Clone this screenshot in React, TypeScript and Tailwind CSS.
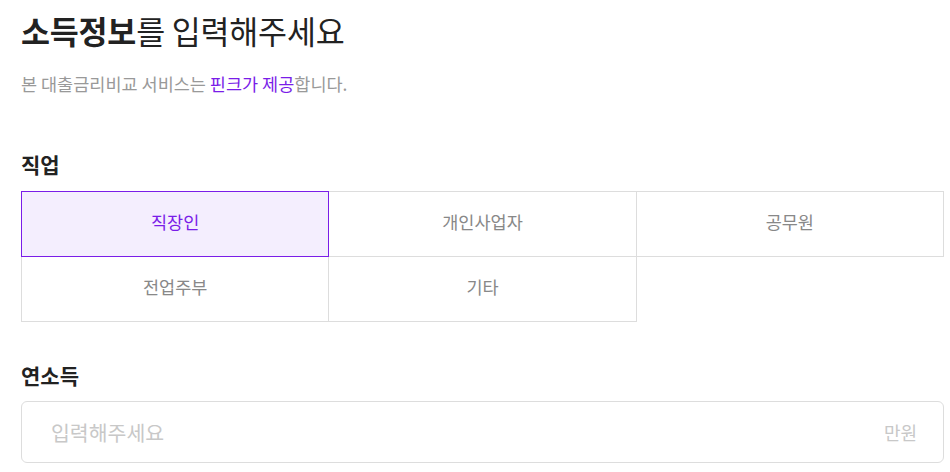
import { useState } from 'react';

const JOBS = ['직장인', '개인사업자', '공무원', '전업주부', '기타'];

const font = { fontFamily: '"Noto Sans CJK KR", "Noto Sans", sans-serif' };

export default function App() {
  const [job, setJob] = useState('직장인');
  const [income, setIncome] = useState('');

  return (
    <div className="min-h-screen bg-white" style={font}>
      <div className="w-[923px] ml-[21px] pt-[10px]">
        {/* Title */}
        <h1 className="text-[31.5px] leading-[40px] text-[#222] tracking-[-0.2px]">
          <span className="font-bold">소득정보</span>
          <span className="font-normal">를 입력해주세요</span>
        </h1>
        <p className="mt-[22px] text-[17.5px] leading-[24px] text-[#999]">
          본 대출금리비교 서비스는 <span className="text-[#7a1de8]">핀크가 제공</span>합니다.
        </p>

        {/* Job */}
        <h2 className="mt-[54px] text-[21px] leading-[28px] font-bold text-[#222]">직업</h2>
        <div className="mt-[13px] grid grid-cols-3 pl-px pt-px">
          {JOBS.map((j) => {
            const active = job === j;
            return (
              <button
                key={j}
                onClick={() => setJob(j)}
                className={`-ml-px -mt-px h-[66px] border pb-[4px] text-[17.5px] ${
                  active
                    ? 'relative z-10 border-[#7a1de8] bg-[#f4eefe] text-[#7a1de8]'
                    : 'border-[#dddddd] bg-white text-[#888]'
                }`}
              >
                {j}
              </button>
            );
          })}
        </div>

        {/* Income */}
        <h2 className="mt-[39px] text-[21px] leading-[28px] font-bold text-[#222]">연소득</h2>
        <div className="mt-[12px] h-[62px] flex items-center border border-[#dddddd] rounded-[6px] pl-[29px] pr-[26px]">
          <input
            value={income}
            onChange={(e) => setIncome(e.target.value)}
            placeholder="입력해주세요"
            className="flex-1 bg-transparent outline-none text-[20.5px] text-[#222] placeholder:text-[#c8c8c8]"
            style={font}
          />
          <span className="text-[18px] text-[#c8c8c8]">만원</span>
        </div>
      </div>
    </div>
  );
}
